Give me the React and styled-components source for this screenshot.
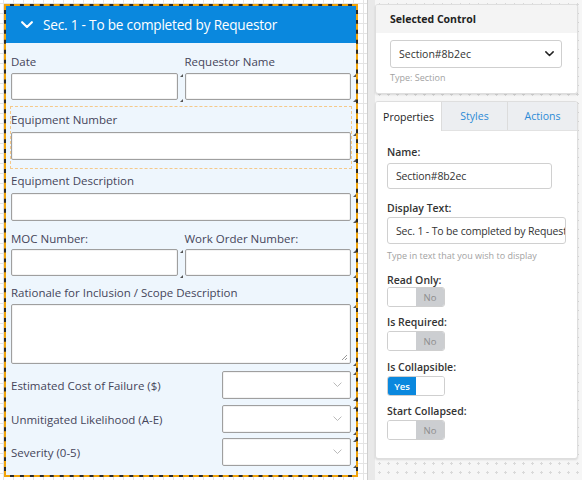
import React from "react";
import styled, { createGlobalStyle } from "styled-components";

const Global = createGlobalStyle`
  html, body { margin: 0; padding: 0; }
  body { font-family: "Open Sans", "Liberation Sans", sans-serif; width: 582px; height: 480px; overflow: hidden; }
  * { box-sizing: border-box; }
`;

const Page = styled.div`
  display: flex;
  width: 582px;
  height: 480px;
`;

const Canvas = styled.div`
  width: 368px;
  height: 480px;
  padding: 4px 0 0 4px;
  background-color: #fff;
  background-image:
    linear-gradient(to right, #e4e4e4 1px, transparent 1px),
    linear-gradient(to bottom, #e4e4e4 1px, transparent 1px);
  background-size: 10px 10px;
  background-position: 3px 3px;
`;

const Section = styled.div`
  width: 354px;
  border: 2px dashed #f0a30a;
  background: #2a2a2a;
  display: flex;
  flex-direction: column;
`;

const SectionHeader = styled.div`
  height: 37px;
  background: #0a88de;
  color: #fff;
  display: flex;
  align-items: center;
  gap: 10px;
  padding-left: 15px;
  font-size: 13.6px;
  letter-spacing: -0.2px;
`;

const SectionBody = styled.div`
  background: #eef6fd;
  padding: 6px 5px 9px 5px;
  display: flex;
  flex-direction: column;
`;

const Row = styled.div`
  display: grid;
  grid-template-columns: 1fr 1fr;
  column-gap: 7px;
`;

const Field = styled.div`
  position: relative;
  padding: 4px 0 ${(p) => p.$pb ?? 5}px;
  ${(p) => p.$selected && `outline: 1px dashed #f5c98a; outline-offset: 0px;`}
`;

const Label = styled.div`
  font-size: 11.5px;
  line-height: 18px;
  color: #45455a;
  margin-bottom: ${(p) => p.$mb ?? 3}px;
  white-space: nowrap;
`;

const Input = styled.div`
  position: relative;
  height: ${(p) => p.$h ?? 28}px;
  background: #fff;
  border: 1px solid #9f9f9f;
  border-radius: 2px;
  box-shadow: inset 0 0 0 1px #f3f3f3;
  &::before, &::after {
    content: "";
    position: absolute;
    right: -6px;
    width: 0; height: 0;
    border-left: 3px solid transparent;
    border-bottom: 3px solid #555;
  }
  &::before { top: 0; }
  &::after { bottom: -3px; }
`;

const Grip = styled.svg`
  position: absolute;
  right: 2px;
  bottom: 2px;
`;

const SelectRow = styled.div`
  display: flex;
  align-items: center;
  justify-content: space-between;
  margin-top: ${(p) => p.$mt ?? 6}px;
`;

const SelectLabel = styled.div`
  font-size: 11.5px;
  color: #45455a;
`;

const SmallSelect = styled(Input)`
  width: 129px;
  height: 28px;
  display: flex;
  align-items: center;
  justify-content: flex-end;
  padding-right: 8px;
`;

const Splitter = styled.div`
  width: 8px;
  background: #e9e9e9;
  border-left: 1px solid #cfcfcf;
`;

const Panel = styled.div`
  flex: 1;
  padding: 4px 4px 0 0;
  background-color: #f6f6f6;
  background-image: radial-gradient(#d9d9d9 1px, transparent 1.2px);
  background-size: 9px 9px;
  display: flex;
  flex-direction: column;
  gap: 7px;
`;

const Card = styled.div`
  background: #fff;
  border: 1px solid #dedede;
  border-radius: 3px;
  box-shadow: 0 1px 2px rgba(0,0,0,0.12);
  overflow: hidden;
`;

const CardHeader = styled.div`
  height: 28px;
  background: #f4f4f4;
  display: flex;
  align-items: center;
  padding-left: 14px;
  font-size: 10.5px;
  font-weight: 700;
  color: #222;
`;

const CardBody = styled.div`
  padding: ${(p) => p.$pad ?? "7px 14px 9px"};
`;

const Select = styled.div`
  height: 28px;
  width: 172px;
  border: 1px solid #cfcfcf;
  border-radius: 3px;
  display: flex;
  align-items: center;
  justify-content: space-between;
  padding: 0 7px 0 8px;
  font-size: 10.5px;
  color: #333;
`;

const Hint = styled.div`
  font-size: 9px;
  line-height: 13px;
  color: #a2a2a2;
  margin-top: ${(p) => p.$mt ?? 4}px;
`;

const Tabs = styled.div`
  display: flex;
  height: 29px;
  background: #eceef1;
  border-bottom: 1px solid #e2e2e2;
`;

const Tab = styled.div`
  flex: ${(p) => (p.$w ? `0 0 ${p.$w}px` : 1)};
  display: flex;
  align-items: center;
  justify-content: center;
  font-size: 10.5px;
  color: ${(p) => (p.$active ? "#222" : "#2b8ad6")};
  background: ${(p) => (p.$active ? "#fff" : "transparent")};
  border-right: 1px solid #dcdcdc;
  margin-bottom: ${(p) => (p.$active ? "-1px" : "0")};
  &:last-child { border-right: none; }
`;

const PropLabel = styled.div`
  font-size: 10.5px;
  font-weight: 600;
  color: #333;
  line-height: 14px;
  margin-top: ${(p) => p.$mt ?? 0}px;
  margin-bottom: ${(p) => p.$mb ?? 2}px;
`;

const TextBox = styled.div`
  height: ${(p) => p.$h ?? 27}px;
  width: ${(p) => p.$w}px;
  border: 1px solid #d0d0d0;
  border-radius: 3px;
  display: flex;
  align-items: center;
  padding-left: 8px;
  font-size: 10.5px;
  letter-spacing: -0.15px;
  color: #333;
  white-space: nowrap;
  overflow: hidden;
`;

const Toggle = styled.div`
  display: flex;
  width: 58px;
  height: 20px;
  border: 1px solid #cfcfcf;
  border-radius: 3px;
  overflow: hidden;
`;

const ToggleHalf = styled.div`
  flex: 1;
  display: flex;
  align-items: center;
  justify-content: center;
  font-size: 9.5px;
  font-weight: ${(p) => (p.$on ? 600 : 400)};
  background: ${(p) => (p.$on ? "#0a88de" : p.$off ? "#ccced1" : "#fff")};
  color: ${(p) => (p.$on ? "#fff" : "#8d8d8d")};
`;

const Chevron = ({ color = "#fff", size = 12, sw = 2 }) => (
  <svg width={size} height={size * 0.65} viewBox="0 0 12 8" fill="none">
    <path d="M1 1.2 L6 6.2 L11 1.2" stroke={color} strokeWidth={sw} strokeLinecap="round" strokeLinejoin="round" />
  </svg>
);

const SwitchRow = ({ label, yes, mt, mb = 2 }) => (
  <>
    <PropLabel $mt={mt} $mb={mb}>{label}</PropLabel>
    <Toggle>
      {yes ? (
        <>
          <ToggleHalf $on>Yes</ToggleHalf>
          <ToggleHalf />
        </>
      ) : (
        <>
          <ToggleHalf />
          <ToggleHalf $off>No</ToggleHalf>
        </>
      )}
    </Toggle>
  </>
);

export default function App() {
  return (
    <>
      <Global />
      <Page>
        <Canvas>
          <Section>
            <SectionHeader>
              <Chevron size={12} sw={2.2} />
              <span>Sec. 1 - To be completed by Requestor</span>
            </SectionHeader>
            <SectionBody>
              <Row>
                <Field $pb={7}>
                  <Label $mb={2}>Date</Label>
                  <Input $h={27} />
                </Field>
                <Field $pb={7}>
                  <Label $mb={2}>Requestor Name</Label>
                  <Input $h={27} />
                </Field>
              </Row>
              <Field $selected $pb={8}>
                <Label>Equipment Number</Label>
                <Input />
              </Field>
              <Field $pb={5}>
                <Label>Equipment Description</Label>
                <Input />
              </Field>
              <Row>
                <Field $pb={4}>
                  <Label $mb={1}>MOC Number:</Label>
                  <Input $h={27} />
                </Field>
                <Field $pb={4}>
                  <Label $mb={1}>Work Order Number:</Label>
                  <Input $h={27} />
                </Field>
              </Row>
              <Field $pb={5}>
                <Label $mb={2}>Rationale for Inclusion / Scope Description</Label>
                <Input $h={60}>
                  <Grip width="8" height="8" viewBox="0 0 8 8">
                    <path d="M7 2 L2 7 M7 5 L5 7" stroke="#999" strokeWidth="1" />
                  </Grip>
                </Input>
              </Field>
              <SelectRow $mt={2}>
                <SelectLabel>Estimated Cost of Failure ($)</SelectLabel>
                <SmallSelect><Chevron color="#b5b5b5" size={9} sw={1.3} /></SmallSelect>
              </SelectRow>
              <SelectRow>
                <SelectLabel>Unmitigated Likelihood (A-E)</SelectLabel>
                <SmallSelect><Chevron color="#b5b5b5" size={9} sw={1.3} /></SmallSelect>
              </SelectRow>
              <SelectRow $mt={5}>
                <SelectLabel>Severity (0-5)</SelectLabel>
                <SmallSelect><Chevron color="#b5b5b5" size={9} sw={1.3} /></SmallSelect>
              </SelectRow>
            </SectionBody>
          </Section>
        </Canvas>
        <Splitter />
        <Panel>
          <Card>
            <CardHeader>Selected Control</CardHeader>
            <CardBody>
              <Select>
                <span>Section#8b2ec</span>
                <Chevron color="#222" size={9} sw={2} />
              </Select>
              <Hint $mt={3}>Type: Section</Hint>
            </CardBody>
          </Card>
          <Card>
            <Tabs>
              <Tab $active $w={66}>Properties</Tab>
              <Tab $w={66}>Styles</Tab>
              <Tab>Actions</Tab>
            </Tabs>
            <CardBody $pad="14px 11px 18px">
              <PropLabel $mb={4}>Name:</PropLabel>
              <TextBox $w={165} $h={26}>Section#8b2ec</TextBox>
              <PropLabel $mt={12} $mb={2}>Display Text:</PropLabel>
              <TextBox $w={179}>Sec. 1 - To be completed by Requestor</TextBox>
              <Hint $mt={5}>Type in text that you wish to display</Hint>
              <SwitchRow label="Read Only:" mt={11} mb={0} />
              <SwitchRow label="Is Required:" mt={8} />
              <SwitchRow label="Is Collapsible:" yes mt={9} />
              <SwitchRow label="Start Collapsed:" mt={8} />
            </CardBody>
          </Card>
        </Panel>
      </Page>
    </>
  );
}
